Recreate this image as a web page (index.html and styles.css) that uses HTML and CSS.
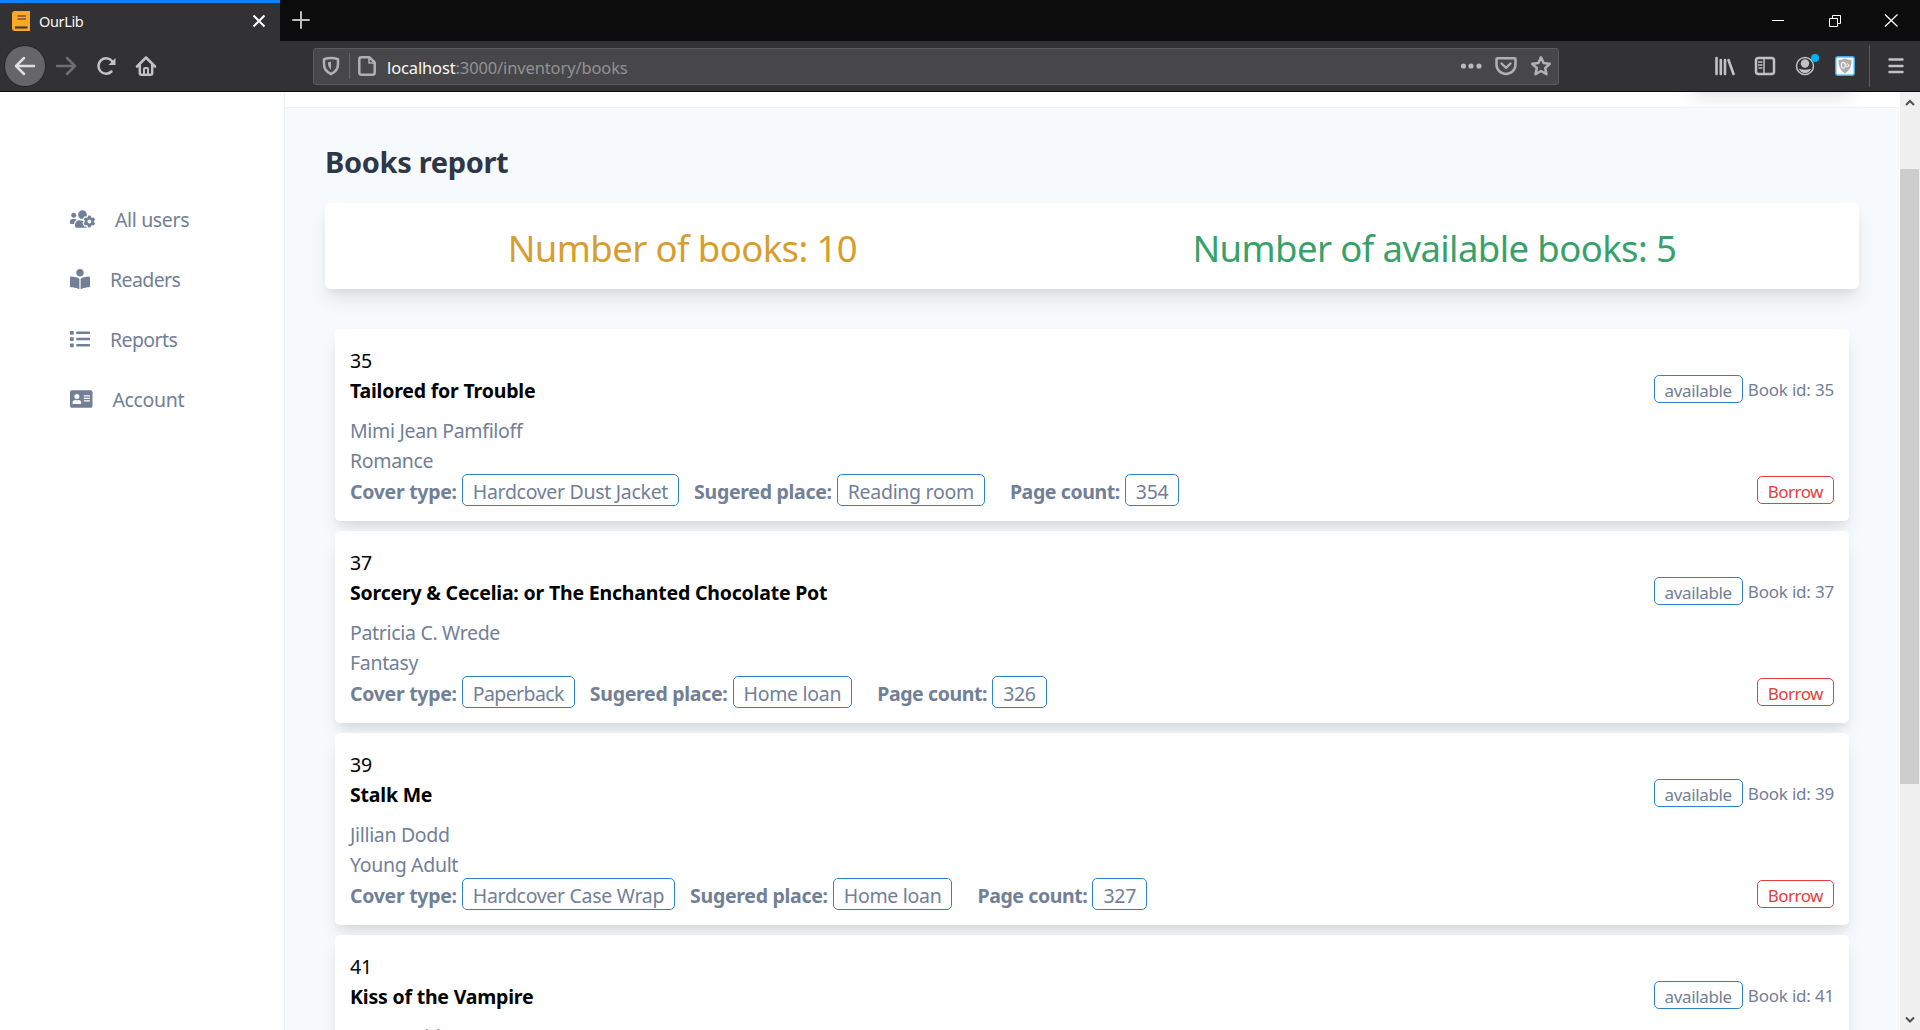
FILE: index.html
```html
<!DOCTYPE html>
<html lang="en">
<head>
<meta charset="utf-8">
<title>OurLib</title>
<link rel="stylesheet" href="styles.css">
</head>
<body>
<div class="window">
  <header class="titlebar">
    <div class="tab">
      <svg class="tab-icon" width="18" height="20" viewBox="0 0 18 20"><path d="M3 0h15v20H3a3 3 0 0 1-3-3V3a3 3 0 0 1 3-3z" fill="#ffa726"/><path d="M5.500 5h8.500M5.500 8h8.500" stroke="#76542a" stroke-width="1.400"/><path d="M3 16.500h12.500" stroke="#4a3c28" stroke-width="2.200"/></svg>
      <span class="tab-title">OurLib</span>
      <svg class="tab-close" width="14" height="14" viewBox="0 0 14 14" fill="none" stroke="#fff" stroke-width="2"><path d="M1.500 1.500l11 11M12.500 1.500l-11 11"/></svg>
    </div>
    <svg class="new-tab" width="18" height="18" viewBox="0 0 18 18" stroke="#bdbdbe" stroke-width="2" stroke-linecap="round"><path d="M9 1v16M1 9h16"/></svg>
    <div class="window-buttons">
      <svg width="57" height="40" viewBox="0 0 57 40"><path d="M23 19.500h12" stroke="#fff"/></svg>
      <svg width="57" height="40" viewBox="0 0 57 40" fill="none" stroke="#fff"><path d="M23.500 17.500h8v8h-8zM26.500 17.500v-3h8v8h-3"/></svg>
      <svg width="57" height="40" viewBox="0 0 57 40" fill="none" stroke="#fff" stroke-width="1.200"><path d="M22 13.500l12.500 12M34.500 13.500l-12.500 12"/></svg>
    </div>
  </header>

  <nav class="toolbar">
    <div class="tool back"><svg width="22" height="20" viewBox="0 0 22 20"><path d="M20 10H2.500M10 2L2 10l8 8"/></svg></div>
    <div class="tool forward"><svg width="22" height="20" viewBox="0 0 22 20"><path d="M2 10h17.500M12 2l8 8-8 8"/></svg></div>
    <div class="tool"><svg width="22" height="20" viewBox="0 0 22 20"><path d="M16.500 15.500A7.700 7.700 0 1 1 17 5l1.500 2"/><path d="M20.500 2v7h-7z" fill="#c2c2c3" stroke="none"/></svg></div>
    <div class="tool"><svg width="22" height="22" viewBox="0 0 22 22"><path d="M2 11.500L11 2.500l9 9M4.800 10v8.600q0 1.200 1.200 1.200h10q1.200 0 1.200-1.200V10"/><path d="M9 20v-6q0-1 1-1h2q1 0 1 1v6" stroke-width="2"/></svg></div>
    <div class="address">
      <svg class="shield" width="18" height="20" viewBox="0 0 18 20"><path d="M9 2Q5.500 2 2 3.200V8q0 7 7 10 7-3 7-10V3.200Q12.500 2 9 2z"/><path d="M9 5.800v8Q6 11.500 6 8V6.200z" fill="#b1b1b3" stroke="none"/></svg>
      <span class="address-rule"></span>
      <svg class="page" width="18" height="20" viewBox="0 0 18 20"><path d="M3.500 1.300h8L16.700 6.500v10q0 2.200-2.200 2.200h-11q-2.200 0-2.200-2.200v-13q0-2.200 2.200-2.200z"/><path d="M11 2v5h5" stroke-width="1.600"/></svg>
      <span class="url"><b>localhost</b>:3000/inventory/books</span>
      <div class="address-actions">
        <svg width="35" height="22" viewBox="0 0 35 22"><g fill="#b9b9ba" stroke="none"><circle cx="10.500" cy="11" r="2.600"/><circle cx="18" cy="11" r="2.600"/><circle cx="26" cy="11" r="2.600"/></g></svg>
        <svg width="35" height="22" viewBox="0 0 35 22"><path d="M9.500 3.200h17q1 0 1 1V9.500a9.500 9.500 0 0 1-19 0V4.200q0-1 1-1z"/><path d="M13.500 8.500l4.500 4.300 4.500-4.300" stroke-width="2.400"/></svg>
        <svg width="35" height="22" viewBox="0 0 35 22"><path d="M18 2.300l2.600 5.800 6.200.7-4.600 4.200 1.300 6.200-5.500-3.200-5.500 3.200 1.300-6.200-4.600-4.200 6.200-.7z" stroke-linejoin="round"/></svg>
      </div>
    </div>
    <div class="tools-right">
      <div class="tool"><svg width="22" height="22" viewBox="0 0 22 22"><path d="M2.500 3v16M6.800 5v14M11 5v14M14.500 5l5 14" stroke-width="2.600"/></svg></div>
      <div class="tool"><svg width="22" height="20" viewBox="0 0 22 20"><rect x="2" y="2" width="18" height="16" rx="2.500"/><path d="M10 2v16" stroke-width="1.500"/><path d="M4.500 6h3.500M4.500 9h3.500M5 12h3" stroke-width="1.300"/></svg></div>
      <div class="tool account"><svg width="22" height="22" viewBox="0 0 22 22"><circle cx="11" cy="11" r="8.500" stroke-width="1.500"/><circle cx="11" cy="8.500" r="4.200" fill="#c2c2c3" stroke="none"/><path d="M4.800 13.800q6.200 1.800 12.400 0-1.800 4.200-6.200 4.200t-6.200-4.200z" fill="#c2c2c3" stroke="none"/></svg><i class="dot"></i></div>
      <div class="tool"><svg width="20" height="20" viewBox="0 0 20 20"><rect x=".7" y=".7" width="18.600" height="18.600" rx="2" fill="#fafafa" stroke="#3fa9e8" stroke-width="1.400"/><path d="M10 2.500q3 1.500 6.500 1.500.5 9-6.500 13.500Q3 13 3.500 4 7 4 10 2.500z" fill="#acacad" stroke="none"/><ellipse cx="8.300" cy="9.300" rx="1.900" ry="2.900" stroke="#f4f4f4" stroke-width="1.100"/><circle cx="12.300" cy="9.300" r="1.500" stroke="#f4f4f4" stroke-width="1"/></svg></div>
      <span class="tool-rule"></span>
      <div class="tool"><svg width="18" height="18" viewBox="0 0 18 18"><path d="M2.500 2.500h13M2.500 9h13M2.500 15h13" stroke-width="2.400"/></svg></div>
    </div>
  </nav>

  <div class="viewport">
    <aside class="sidebar">
      <a class="side-link"><svg width="25" height="20" viewBox="0 0 640 512"><path d="M610.500 341.300c2.600-14.100 2.600-28.500 0-42.600l25.800-14.900c3-1.700 4.300-5.200 3.300-8.500-6.700-21.600-18.200-41.200-33.200-57.400-2.300-2.500-6-3.100-9-1.400l-25.800 14.900c-10.900-9.300-23.400-16.500-36.900-21.300v-29.800c0-3.400-2.400-6.400-5.700-7.100-22.300-5-45-4.800-66.200 0-3.300.7-5.700 3.700-5.700 7.100v29.800c-13.500 4.800-26 12-36.900 21.300l-25.800-14.900c-2.900-1.700-6.700-1.100-9 1.400-15 16.200-26.500 35.800-33.200 57.400-1 3.300.4 6.800 3.300 8.500l25.800 14.900c-2.600 14.100-2.600 28.500 0 42.600l-25.800 14.900c-3 1.700-4.300 5.200-3.300 8.500 6.700 21.600 18.200 41.100 33.200 57.400 2.300 2.500 6 3.100 9 1.400l25.800-14.900c10.900 9.300 23.400 16.500 36.900 21.300v29.800c0 3.400 2.400 6.400 5.700 7.100 22.300 5 45 4.800 66.200 0 3.300-.7 5.700-3.700 5.700-7.100v-29.800c13.500-4.800 26-12 36.900-21.300l25.800 14.900c2.900 1.700 6.700 1.100 9-1.400 15-16.200 26.500-35.800 33.200-57.400 1-3.300-.4-6.800-3.300-8.500l-25.800-14.900zM496 368.500c-26.800 0-48.500-21.800-48.500-48.500s21.800-48.500 48.500-48.500 48.500 21.800 48.500 48.500-21.700 48.500-48.500 48.500zM96 224c35.300 0 64-28.700 64-64s-28.700-64-64-64-64 28.700-64 64 28.700 64 64 64zm224 32c1.900 0 3.700-.5 5.600-.6 8.300-21.700 20.500-42.100 36.300-59.200 7.400-8 17.900-12.600 28.900-12.600 6.900 0 13.700 1.800 19.600 5.300l7.900 4.600c.8-.5 1.600-.9 2.400-1.400 7-14.600 11.200-30.800 11.200-48 0-61.900-50.100-112-112-112S208 82.100 208 144c0 61.900 50.100 112 112 112zm105.200 194.500c-2.300-1.200-4.600-2.600-6.800-3.900-8.200 4.800-15.300 9.800-27.500 9.800-10.900 0-21.400-4.600-28.900-12.600-18.300-19.800-32.300-43.900-40.200-69.600-10.700-34.500 24.900-49.700 25.800-50.300-.1-2.600-.1-5.200 0-7.800l-7.900-4.600c-3.800-2.200-7-5-9.800-8.100-3.300.2-6.500.6-9.800.6-24.600 0-47.600-6-68.500-16h-8.300C179.600 288 128 339.600 128 403.200V432c0 26.500 21.500 48 48 48h255.400c-3.700-6-6.200-12.800-6.200-20.300v-9.200zM173.100 274.600C161.500 263.100 145.600 256 128 256H64c-35.300 0-64 28.700-64 64v32c0 17.700 14.300 32 32 32h65.900c6.300-47.400 34.900-87.300 75.200-109.400z"/></svg><span>All users</span></a>
      <a class="side-link snug"><svg width="20" height="20" viewBox="0 0 512 512"><path d="M352 96c0-53.020-42.980-96-96-96s-96 42.980-96 96 42.980 96 96 96 96-42.980 96-96zM233.590 241.100c-59.330-36.320-155.430-46.300-203.790-49.050C13.550 191.130 0 203.510 0 219.140v222.800c0 14.330 11.590 26.280 26.490 27.050 43.660 2.290 131.990 10.680 193.040 41.430 9.370 4.720 20.480-1.710 20.480-11.870V252.560c-.01-4.670-2.320-8.950-6.420-11.460zm248.610-49.050c-48.350 2.740-144.460 12.730-203.780 49.050-4.100 2.510-6.410 6.960-6.410 11.630v245.790c0 10.190 11.140 16.630 20.540 11.900 61.040-30.720 149.320-39.110 192.970-41.400 14.900-.78 26.490-12.730 26.490-27.060V219.140c-.01-15.630-13.560-28.010-29.810-27.090z"/></svg><span>Readers</span></a>
      <a class="side-link snug"><svg width="20" height="20" viewBox="0 0 512 512"><rect y="48" width="96" height="96" rx="16"/><rect y="208" width="96" height="96" rx="16"/><rect y="368" width="96" height="96" rx="16"/><rect x="160" y="64" width="352" height="64" rx="16"/><rect x="160" y="224" width="352" height="64" rx="16"/><rect x="160" y="384" width="352" height="64" rx="16"/></svg><span>Reports</span></a>
      <a class="side-link"><svg width="22.500" height="20" viewBox="0 0 576 512"><rect y="32" width="576" height="448" rx="48"/><g fill="#fff"><circle cx="176" cy="192" r="64"/><path d="M64 364v-17c0-40 30-67 67-67q45 14 90 0c37 0 67 27 67 67v17q0 20-22 20H86q-22 0-22-20z"/><rect x="352" y="160" width="160" height="32" rx="8"/><rect x="352" y="224" width="160" height="32" rx="8"/><rect x="352" y="288" width="160" height="32" rx="8"/></g></svg><span>Account</span></a>
    </aside>

    <main class="main">
      <div class="topbar"><div class="user-menu"></div></div>
      <div class="content">
        <h1 class="heading">Books report</h1>
        <section class="summary">
          <div class="total">Number of books: 10</div>
          <div class="total free">Number of available books: 5</div>
        </section>
        <section class="books">
          <article class="book">
            <div>35</div>
            <div class="title-row"><h2 class="title">Tailored for Trouble</h2><div class="status"><span class="pill">available</span><span>Book id: 35</span></div></div>
            <div class="muted">Mimi Jean Pamfiloff</div>
            <div class="muted">Romance</div>
            <div class="foot"><b>Cover type:</b><span class="tag">Hardcover Dust Jacket</span><b class="place">Sugered place:</b><span class="tag">Reading room</span><b class="count">Page count:</b><span class="tag">354</span><button class="borrow">Borrow</button></div>
          </article>
          <article class="book">
            <div>37</div>
            <div class="title-row"><h2 class="title">Sorcery &amp; Cecelia: or The Enchanted Chocolate Pot</h2><div class="status"><span class="pill">available</span><span>Book id: 37</span></div></div>
            <div class="muted">Patricia C. Wrede</div>
            <div class="muted">Fantasy</div>
            <div class="foot"><b>Cover type:</b><span class="tag snug">Paperback</span><b class="place">Sugered place:</b><span class="tag">Home loan</span><b class="count">Page count:</b><span class="tag">326</span><button class="borrow">Borrow</button></div>
          </article>
          <article class="book">
            <div>39</div>
            <div class="title-row"><h2 class="title">Stalk Me</h2><div class="status"><span class="pill">available</span><span>Book id: 39</span></div></div>
            <div class="muted">Jillian Dodd</div>
            <div class="muted">Young Adult</div>
            <div class="foot"><b>Cover type:</b><span class="tag">Hardcover Case Wrap</span><b class="place">Sugered place:</b><span class="tag">Home loan</span><b class="count">Page count:</b><span class="tag">327</span><button class="borrow">Borrow</button></div>
          </article>
          <article class="book">
            <div>41</div>
            <div class="title-row"><h2 class="title">Kiss of the Vampire</h2><div class="status"><span class="pill">available</span><span>Book id: 41</span></div></div>
            <div class="muted">Nancy Gideon</div>
          </article>
        </section>
      </div>
    </main>

    <div class="scrollbar">
      <svg width="10" height="8" viewBox="0 0 10 8"><path d="M1 6l4-4 4 4"/></svg>
      <div class="thumb"></div>
      <svg class="down" width="10" height="8" viewBox="0 0 10 8"><path d="M1 1.500l4 4 4-4"/></svg>
    </div>
  </div>
</div>
</body>
</html>
```
FILE: styles.css
```css
* { box-sizing: border-box; }
body { margin: 0; font-family: "Noto Sans", "Open Sans", sans-serif; color: #000; }
svg { display: block; flex: none; }
h1, h2 { margin: 0; }

.window { width: 1920px; height: 1030px; display: flex; flex-direction: column; overflow: hidden; }

/* Browser chrome */
.titlebar { height: 41px; flex: none; display: flex; align-items: center; background: #0c0c0c; }
.tab { width: 280px; height: 41px; display: flex; align-items: center; padding: 0 14px 2px 12px; background: #323234; border-top: 3px solid #0a84ff; }
.tab-title { margin-left: 9px; font-size: 14.5px; letter-spacing: -.35px; color: #f9f9fa; }
.tab-close { margin-left: auto; }
.new-tab { margin: 0 0 1px 12px; }
.window-buttons { display: flex; margin-left: auto; }

.toolbar { height: 51px; flex: none; display: flex; align-items: center; padding: 0 4px 0 5px; background: #323234; border-bottom: 1px solid #0c0c0d; }
.tool { width: 40px; height: 40px; display: flex; align-items: center; justify-content: center; position: relative; }
.toolbar svg { fill: none; stroke: #c2c2c3; stroke-width: 2.5; stroke-linecap: round; stroke-linejoin: round; }
.back { border-radius: 50%; background: #666668; box-shadow: 0 0 0 1px #272729; }
.back svg { stroke: #dededf; }
.forward { width: 41px; }
.toolbar .forward svg { stroke: #6f6f71; }
.address { width: 1246px; height: 37px; margin-left: 147px; display: flex; align-items: center; padding-left: 8px; background: #474749; border: 1px solid #5b5b5d; border-radius: 3px; }
.toolbar .address svg { stroke: #b1b1b3; }
.address-rule { width: 1px; height: 26px; margin: 0 8px 0 9px; background: #656567; }
.url { margin-left: 11px; padding-top: 2px; font-size: 16.5px; letter-spacing: -.13px; color: #929294; }
.url b { font-weight: 400; color: #f9f9fa; }
.address-actions { display: flex; margin-left: auto; }
.tools-right { display: flex; align-items: center; margin-left: auto; }
.dot { position: absolute; top: 8px; right: 6px; width: 8px; height: 8px; border-radius: 50%; background: #00b3f4; }
.tool-rule { width: 1px; height: 42px; margin: 0 6px 0 4px; background: #5b5b5d; }

/* Page */
.viewport { flex: 1; min-height: 0; display: flex; overflow: hidden; }
.sidebar { width: 285px; flex: none; padding: 97px 0 0 70px; border-right: 1px solid #edf2f7; background: #fff; }
.side-link { height: 60px; display: flex; align-items: center; gap: 20px; font-size: 19.5px; line-height: 30px; letter-spacing: -.36px; color: #718096; }
.side-link.snug { letter-spacing: -.6px; }
.side-link svg { fill: #718096; }
.side-link span { padding-top: 2px; }

.main { width: 1614px; flex: none; background: #f7fafc; }
.topbar { position: relative; height: 16px; background: #fff; border-bottom: 1px solid #edf2f7; overflow: hidden; }
.user-menu { position: absolute; right: 45px; bottom: 18px; width: 165px; height: 60px; box-shadow: 0 12.5px 18.75px -3.75px rgba(0,0,0,.1), 0 5px 7.5px -2.5px rgba(0,0,0,.05); }
.content { padding: 31px 40px 0; }
.heading { height: 45px; font-size: 29px; line-height: 45px; letter-spacing: -.33px; color: #2d3748; }
.summary { height: 86px; margin-top: 19px; padding: 0 15px; display: flex; align-items: center; justify-content: space-around; background: #fff; border-radius: 5px; }
.summary, .book { box-shadow: 0 12.5px 18.75px -3.75px rgba(0,0,0,.1), 0 5px 7.5px -2.5px rgba(0,0,0,.05); }
.total { padding-top: 4px; font-size: 36.5px; line-height: 56px; letter-spacing: -.6px; color: #d69e2e; }
.free { color: #38a169; }

.books { display: flex; flex-direction: column; gap: 10px; padding: 40px 10px 0; }
.book { height: 192px; flex: none; padding: 17px 15px 13px; background: #fff; border-radius: 5px; font-size: 19.5px; line-height: 30px; letter-spacing: -.22px; }
.title-row { height: 40px; display: flex; align-items: flex-start; justify-content: space-between; }
.title { font-size: 19.5px; line-height: 30px; letter-spacing: -.2px; }
.status { display: flex; gap: 5px; margin-top: -1px; font-size: 17px; line-height: 29px; letter-spacing: -.2px; color: #718096; }
.pill { height: 28px; padding: 3px 10px 0; border: 1px solid #3182ce; border-radius: 5px; line-height: 24px; letter-spacing: -.36px; }
.muted { color: #718096; letter-spacing: -.32px; }
.foot { height: 32px; margin-top: -2px; display: flex; align-items: center; color: #718096; }
.foot b { padding-top: 4px; margin-right: 5px; letter-spacing: -.29px; }
.foot .place { margin-left: 15px; }
.foot .count { margin-left: 25px; letter-spacing: -.4px; }
.tag { height: 32px; padding: 3px 10px 0; border: 1px solid #3182ce; border-radius: 5px; line-height: 28px; letter-spacing: -.3px; }
.tag.snug { letter-spacing: -.6px; }
.borrow { height: 28px; margin-left: auto; padding: 3px 10px 0; border: 1px solid #e53e3e; border-radius: 5px; background: none; font: 17px/24px "Noto Sans", sans-serif; letter-spacing: -.5px; color: #e53e3e; }

.scrollbar { flex: 1; display: flex; flex-direction: column; align-items: center; padding: 7px 0 6px; background: #f0f0f0; border-left: 1px solid #fff; }
.scrollbar svg { fill: none; stroke: #505050; stroke-width: 2; }
.thumb { width: 20px; height: 615px; margin-top: 62px; background: #cdcdcd; border-right: 1px solid #f0f0f0; }
.down { margin-top: auto; }
```
